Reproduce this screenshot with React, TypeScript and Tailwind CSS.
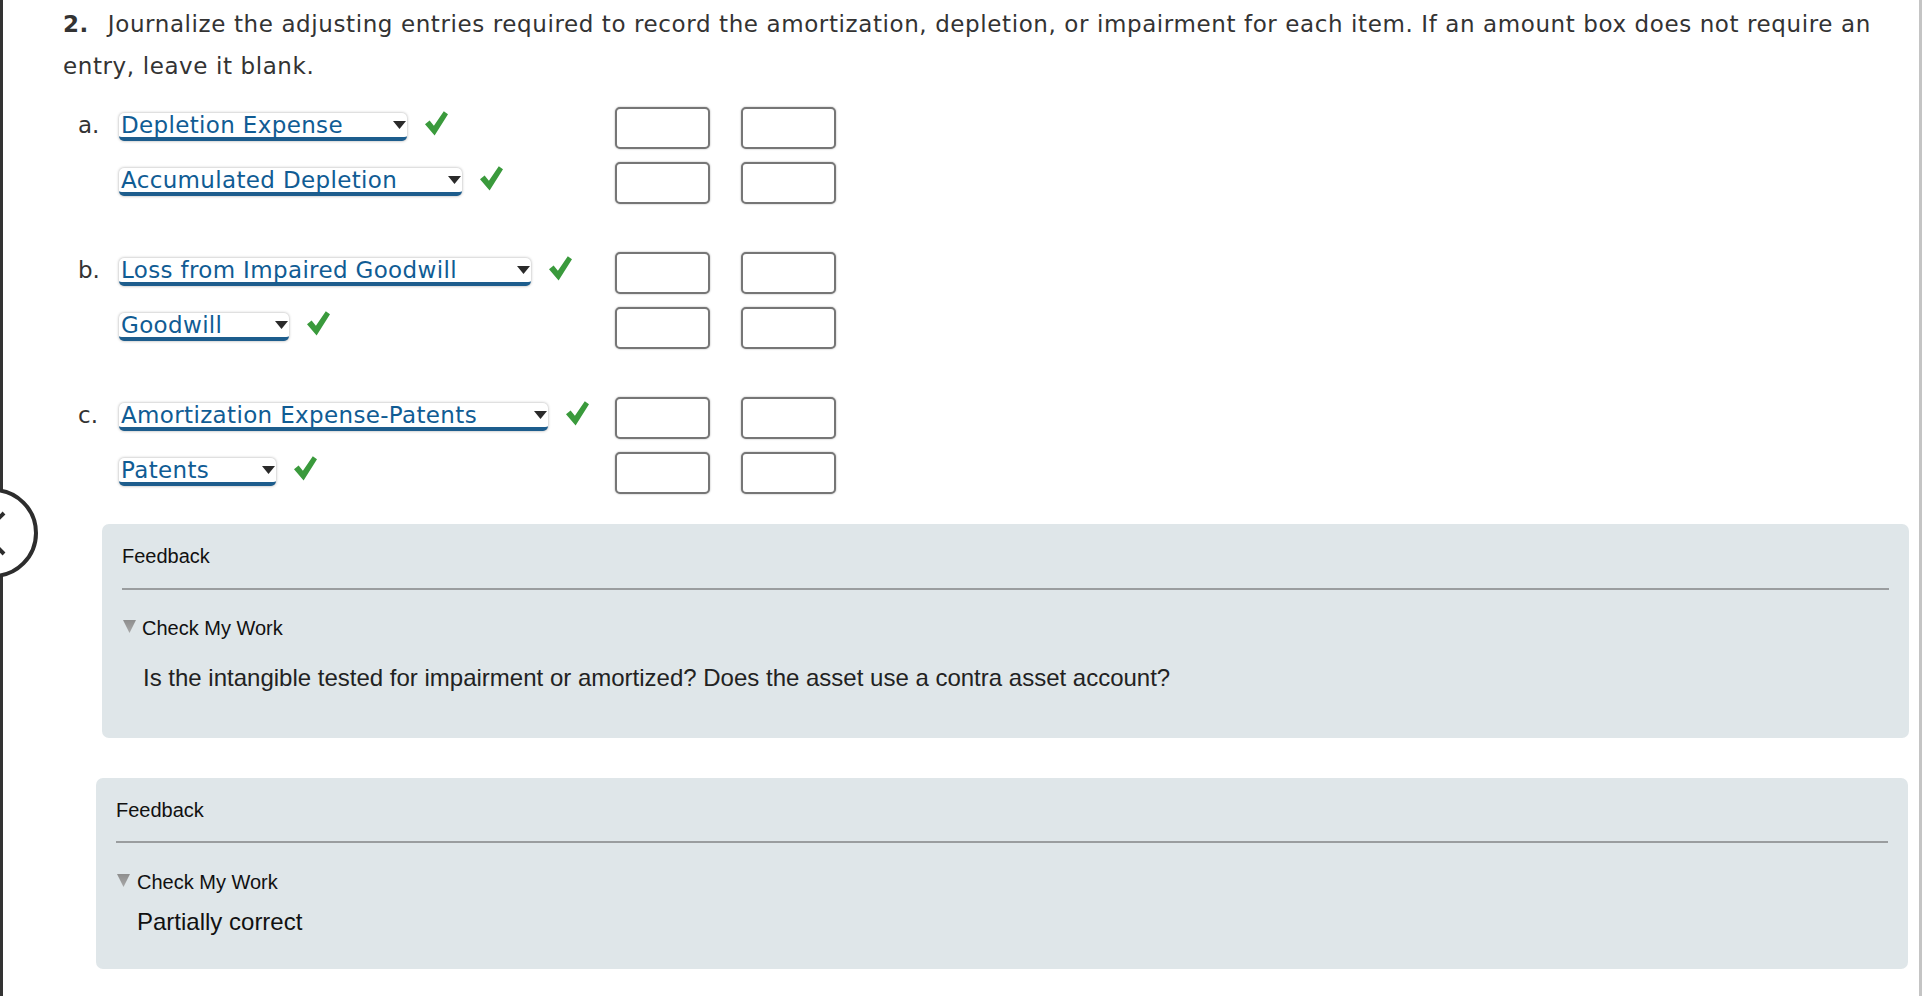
import React from "react";

type Entry = { text: string; w: number };
type Group = { label: string; entries: Entry[] };

const groups: Group[] = [
  {
    label: "a.",
    entries: [
      { text: "Depletion Expense", w: 288 },
      { text: "Accumulated Depletion", w: 343 },
    ],
  },
  {
    label: "b.",
    entries: [
      { text: "Loss from Impaired Goodwill", w: 412 },
      { text: "Goodwill", w: 170 },
    ],
  },
  {
    label: "c.",
    entries: [
      { text: "Amortization Expense-Patents", w: 429 },
      { text: "Patents", w: 157 },
    ],
  },
];

function Check() {
  return (
    <svg width="23" height="25" viewBox="0 0 23 25" className="ml-[18px] shrink-0">
      <path d="M0 13.2 L4.6 9.6 L8.9 14.8 L18.8 0.2 L23 3.2 L9.6 24.6 Z" fill="#3a9a3c" />
    </svg>
  );
}

function Dropdown({ text, w }: Entry) {
  return (
    <div
      className="relative mt-[2px] h-[28px] rounded-[5px] bg-white shadow-[0_0_3px_rgba(0,0,0,0.35)] border-b-4 border-[#1d5d8d] shrink-0"
      style={{ width: w }}
    >
      <span className="block pl-[2px] text-[23px] leading-[24px] tracking-[0.35px] text-[#105c94] whitespace-nowrap">
        {text}
      </span>
      <svg width="13" height="8" viewBox="0 0 13 8" className="absolute right-[1px] top-[8px]">
        <polygon points="0,0 13,0 6.5,8" fill="#2a2a2a" />
      </svg>
    </div>
  );
}

function AmountBox({ className = "" }: { className?: string }) {
  return (
    <div
      className={
        "h-[42px] w-[95px] rounded-[5px] border-2 border-[#767676] bg-white shadow-[0_0_2px_rgba(0,0,0,0.35)] " +
        className
      }
    />
  );
}

function Triangle({ id }: { id: string }) {
  return (
    <svg width="13" height="13" viewBox="0 0 13 13" className="mt-[3px] shrink-0">
      <defs>
        <linearGradient id={id} x1="0" y1="0" x2="0" y2="1">
          <stop offset="0" stopColor="#8e8e8e" />
          <stop offset="1" stopColor="#a8a8a8" />
        </linearGradient>
      </defs>
      <polygon points="0,0 13,0 6.5,13" fill={`url(#${id})`} />
    </svg>
  );
}

export default function App() {
  return (
    <div className="relative w-[1922px] h-[996px] overflow-hidden bg-white">
      <div className="h-full border-l-[3px] border-[#333333] border-r-[3px] border-r-[#c4c4c4] pt-[3px] font-['DejaVu_Sans',sans-serif] text-[#333333]">
        <p className="pl-[60px] text-[23px] leading-[42px] tracking-[0.6px] whitespace-nowrap">
          <span className="font-bold mr-[11px]">2.</span> Journalize the adjusting entries required to record the
          amortization, depletion, or impairment for each item. If an amount box does not require an
          <br />
          entry, leave it blank.
        </p>

        <div className="mt-[20px] flex flex-col gap-[48px] pl-[60px]">
          {groups.map((g) => (
            <div key={g.label} className="flex flex-col gap-[13px]">
              {g.entries.map((e, i) => (
                <div key={e.text} className="flex h-[42px] items-start">
                  <div className="ml-[15px] w-[41px] pt-[6px] text-[23px] leading-[24px]">
                    {i === 0 ? g.label : ""}
                  </div>
                  <div className="flex w-[496px] items-start pt-[4px]">
                    <Dropdown text={e.text} w={e.w} />
                    <Check />
                  </div>
                  <AmountBox />
                  <AmountBox className="ml-[31px]" />
                </div>
              ))}
            </div>
          ))}
        </div>

        <div className="mt-[30px] ml-[99px] w-[1807px] rounded-[7px] bg-[#dfe6e9] pl-[20px] pr-[20px] pt-[21px] pb-[46px] font-['Liberation_Sans',Arial,sans-serif] text-[#111111]">
          <div className="text-[20px] leading-[23px]">Feedback</div>
          <div className="mt-[20px] h-[2px] bg-[#9a9d9f]" />
          <div className="mt-[27px] flex items-start">
            <div className="ml-[1px]">
              <Triangle id="tri1" />
            </div>
            <span className="ml-[6px] text-[20px] leading-[23px]">Check My Work</span>
          </div>
          <p className="mt-[24px] pl-[21px] text-[24px] leading-[28px] text-[#222222]">
            Is the intangible tested for impairment or amortized? Does the asset use a contra asset account?
          </p>
        </div>

        <div className="mt-[40px] ml-[93px] w-[1812px] rounded-[7px] bg-[#dfe6e9] px-[20px] pt-[21px] pb-[33px] font-['Liberation_Sans',Arial,sans-serif] text-[#111111]">
          <div className="text-[20px] leading-[23px]">Feedback</div>
          <div className="mt-[19px] h-[2px] bg-[#9a9d9f]" />
          <div className="mt-[28px] flex items-start">
            <div className="ml-[1px]">
              <Triangle id="tri2" />
            </div>
            <span className="ml-[7px] text-[20px] leading-[23px]">Check My Work</span>
          </div>
          <p className="mt-[14px] pl-[21px] text-[24px] leading-[28px]">Partially correct</p>
        </div>
      </div>

      {/* side nav button, partly off the left edge */}
      <div className="absolute left-[-52px] top-[488px] h-[90px] w-[90px] rounded-full border-4 border-[#2d2d2d] bg-white">
        <svg width="30" height="50" viewBox="0 0 30 50" className="absolute left-[24px] top-[17px]">
          <polyline points="28,4 8,24 28,45" fill="none" stroke="#2d2d2d" strokeWidth="4" />
        </svg>
      </div>
    </div>
  );
}
